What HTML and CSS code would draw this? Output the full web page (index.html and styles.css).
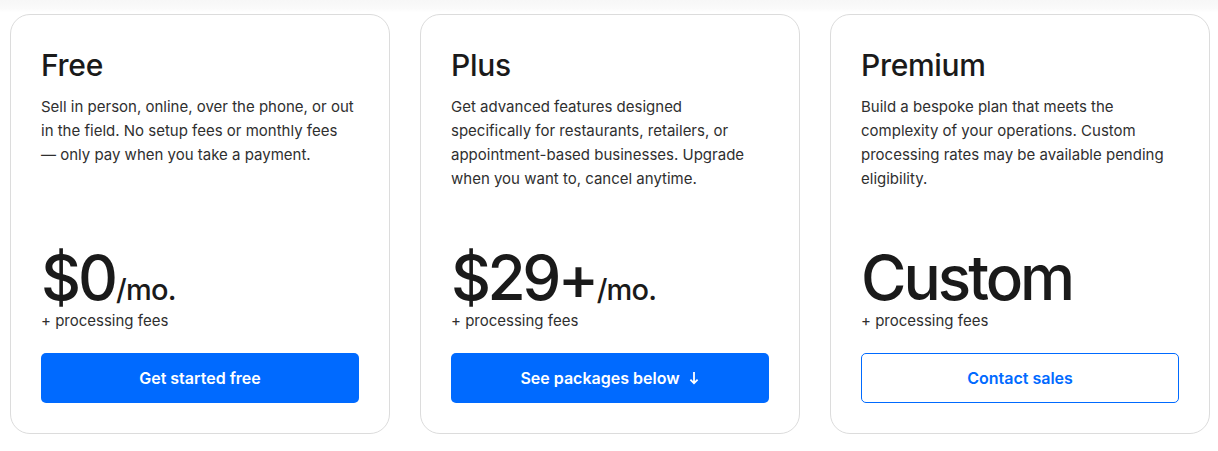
FILE: index.html
```html
<!DOCTYPE html>
<html lang="en">
<head>
<meta charset="utf-8">
<title>Pricing</title>
<link rel="stylesheet" href="styles.css">
</head>
<body>
<div class="topband"></div>
<main class="plans">
  <section class="card">
    <h2 class="title">Free</h2>
    <p class="desc">Sell in person, online, over the phone, or out<br>in the field. No setup fees or monthly fees<br>— only pay when you take a payment.</p>
    <div class="bottom">
      <div class="price"><span class="amount">$0</span><span class="per">/mo.</span></div>
      <div class="fees">+ processing fees</div>
      <a class="btn primary" href="#">Get started free</a>
    </div>
  </section>
  <section class="card">
    <h2 class="title">Plus</h2>
    <p class="desc">Get advanced features designed<br>specifically for restaurants, retailers, or<br>appointment-based businesses. Upgrade<br>when you want to, cancel anytime.</p>
    <div class="bottom">
      <div class="price"><span class="amount tight">$29+</span><span class="per">/mo.</span></div>
      <div class="fees">+ processing fees</div>
      <a class="btn primary" href="#">See packages below <svg class="arrow" width="12" height="14" viewBox="0 0 12 14" aria-hidden="true"><path d="M6 1v11.5M2.4 8.6 6 12.3 9.6 8.6" fill="none" stroke="#fff" stroke-width="1.8"/></svg></a>
    </div>
  </section>
  <section class="card">
    <h2 class="title">Premium</h2>
    <p class="desc">Build a bespoke plan that meets the<br>complexity of your operations. Custom<br>processing rates may be available pending<br>eligibility.</p>
    <div class="bottom">
      <div class="price"><span class="amount">Custom</span></div>
      <div class="fees">+ processing fees</div>
      <a class="btn outline" href="#">Contact sales</a>
    </div>
  </section>
</main>
</body>
</html>
```

FILE: styles.css
```css
html, body {
  margin: 0;
  padding: 0;
  background: #fff;
}
body {
  font-family: Inter, "Noto Sans", "Liberation Sans", sans-serif;
  color: #1a1a1a;
  position: relative;
}
.topband {
  position: absolute;
  left: 0;
  right: 0;
  top: 0;
  height: 12px;
  background: linear-gradient(#f7f7f7, #fafafa 70%, #fff);
}
.plans {
  position: relative;
  display: flex;
  gap: 30px;
  padding: 14px 8px 0 10px;
}
.card {
  width: 380px;
  height: 420px;
  box-sizing: border-box;
  border: 1px solid #dcdcdc;
  border-radius: 20px;
  background: #fff;
  padding: 32px 30px 30px;
  display: flex;
  flex-direction: column;
}
.title {
  margin: 0;
  font-size: 30px;
  line-height: 36px;
  font-weight: 500;
  letter-spacing: -0.3px;
  color: #1a1a1a;
}
.desc {
  margin: 12px 0 0;
  font-size: 15px;
  line-height: 24px;
  color: #2f2f2f;
  white-space: nowrap;
}
.bottom {
  margin-top: auto;
  display: flex;
  flex-direction: column;
}
.price {
  display: flex;
  align-items: baseline;
  line-height: 62px;
  height: 62px;
}
.amount {
  font-size: 62px;
  font-weight: 500;
  letter-spacing: -3px;
  color: #1a1a1a;
}
.amount.tight {
  letter-spacing: -3.5px;
}
.per {
  font-size: 29px;
  font-weight: 500;
  letter-spacing: -0.8px;
  margin-left: 1px;
}
.fees {
  font-size: 15px;
  line-height: 24px;
  color: #2f2f2f;
}
.btn {
  margin-top: 20px;
  height: 50px;
  box-sizing: border-box;
  border-radius: 5px;
  display: flex;
  align-items: center;
  justify-content: center;
  gap: 8px;
  font-size: 16px;
  font-weight: 600;
  text-decoration: none;
}
.primary {
  background: #006aff;
  color: #fff;
}
.outline {
  border: 1px solid #006aff;
  color: #006aff;
  background: #fff;
}
.arrow {
  display: block;
}
```
